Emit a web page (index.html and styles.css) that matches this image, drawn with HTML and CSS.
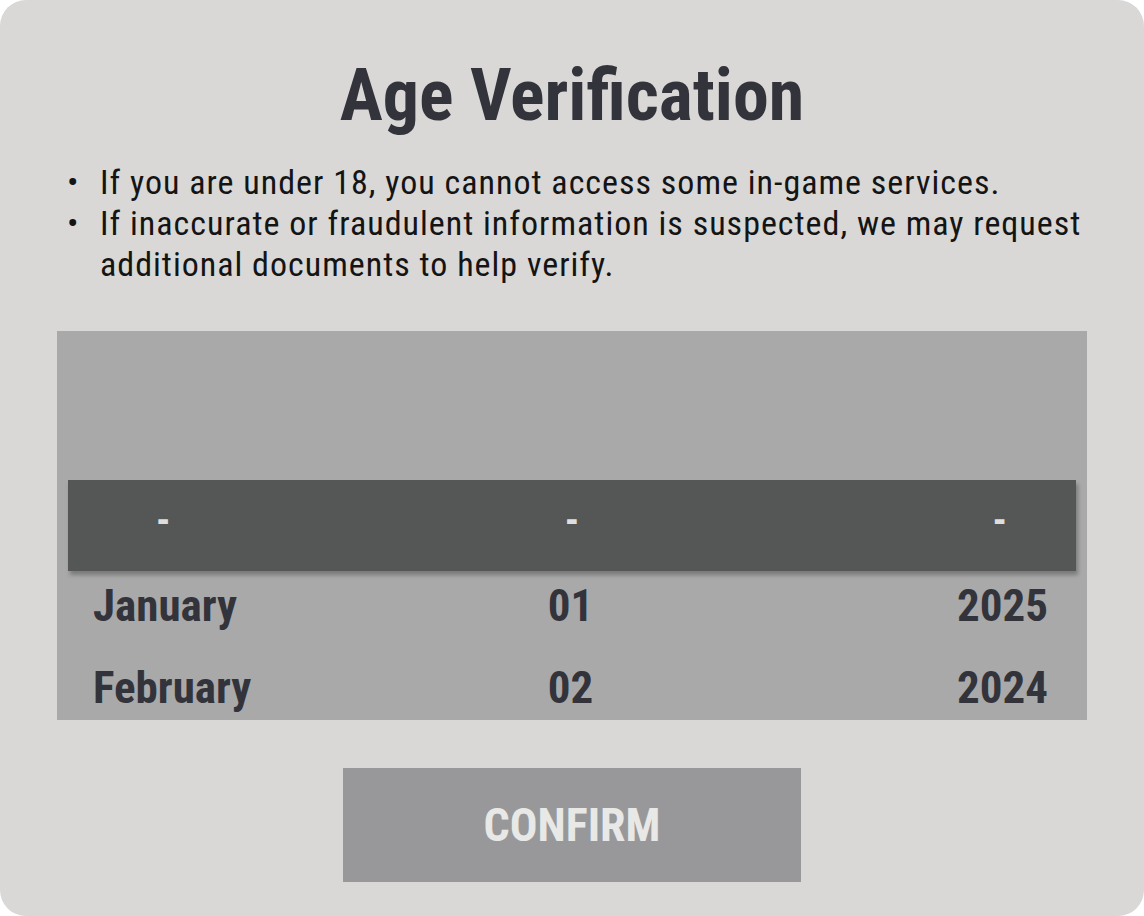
FILE: index.html
```html
<!DOCTYPE html>
<html lang="en">
<head>
<meta charset="utf-8">
<title>Age Verification</title>
<link rel="stylesheet" href="styles.css">
</head>
<body>
<main class="panel">
  <h1 class="title">Age Verification</h1>
  <ul class="notes">
    <li>If you are under 18, you cannot access some in-game services.</li>
    <li>If inaccurate or fraudulent information is suspected, we may request additional documents to help verify.</li>
  </ul>
  <section class="picker">
    <div class="picker-space"></div>
    <div class="band">
      <span class="dash dash-month">-</span>
      <span class="dash dash-day">-</span>
      <span class="dash dash-year">-</span>
    </div>
    <div class="rows">
      <div class="row"><span class="c-month">January</span><span class="c-day">01</span><span class="c-year">2025</span></div>
      <div class="row"><span class="c-month">February</span><span class="c-day">02</span><span class="c-year">2024</span></div>
    </div>
  </section>
  <div class="actions">
    <button class="confirm" type="button">CONFIRM</button>
  </div>
</main>
</body>
</html>
```
FILE: styles.css
```css
html, body {
  margin: 0;
  padding: 0;
  background: #ffffff;
}
body {
  font-family: "Roboto", "Liberation Sans", sans-serif;
  font-stretch: 75%;
}
.panel {
  width: 1144px;
  height: 916px;
  box-sizing: border-box;
  background: #d9d8d6;
  border-radius: 26px;
  padding: 56px 57px 0 57px;
  display: flex;
  flex-direction: column;
  overflow: hidden;
}
.title {
  margin: 0;
  font-size: 72px;
  line-height: 80px;
  font-weight: 700;
  text-align: center;
  color: #33343b;
}
.notes {
  margin: 26px 0 0 0;
  padding: 0 0 0 43px;
  list-style: none;
  font-size: 34px;
  letter-spacing: 1px;
  line-height: 41px;
  color: #141414;
}
.notes li {
  position: relative;
}
.notes li::before {
  content: "\2022";
  position: absolute;
  left: -33px;
  top: 0;
}
.picker {
  margin-top: 46px;
  height: 389px;
  background: #a9a9a9;
  display: flex;
  flex-direction: column;
  overflow: hidden;
}
.picker-space {
  height: 149px;
  flex: none;
}
.band {
  flex: none;
  height: 91px;
  margin: 0 11px;
  background: #555756;
  box-shadow: 2px 4px 4px rgba(0, 0, 0, 0.28);
  display: grid;
  grid-template-columns: 1fr 1fr 1fr;
  align-items: center;
  color: #dedede;
  font-size: 40px;
  font-weight: 700;
  position: relative;
  z-index: 1;
}
.dash {
  margin-top: -10px;
}
.dash-month { justify-self: start; padding-left: 88px; }
.dash-day { justify-self: center; }
.dash-year { justify-self: end; padding-right: 69px; }
.rows {
  margin-top: -7px;
  padding: 0 39px 0 36px;
}
.row {
  height: 82px;
  display: grid;
  grid-template-columns: 1fr auto 1fr;
  align-items: center;
  font-size: 45px;
  font-weight: 700;
  color: #33343b;
}
.c-month { justify-self: start; }
.c-day { justify-self: center; }
.c-year { justify-self: end; }
.actions {
  margin-top: 48px;
  display: flex;
  justify-content: center;
}
.confirm {
  width: 458px;
  height: 114px;
  border: 0;
  padding: 0;
  background: #98989a;
  color: #e8e8e6;
  font-family: inherit;
  font-stretch: 75%;
  font-size: 46px;
  font-weight: 700;
}
```
